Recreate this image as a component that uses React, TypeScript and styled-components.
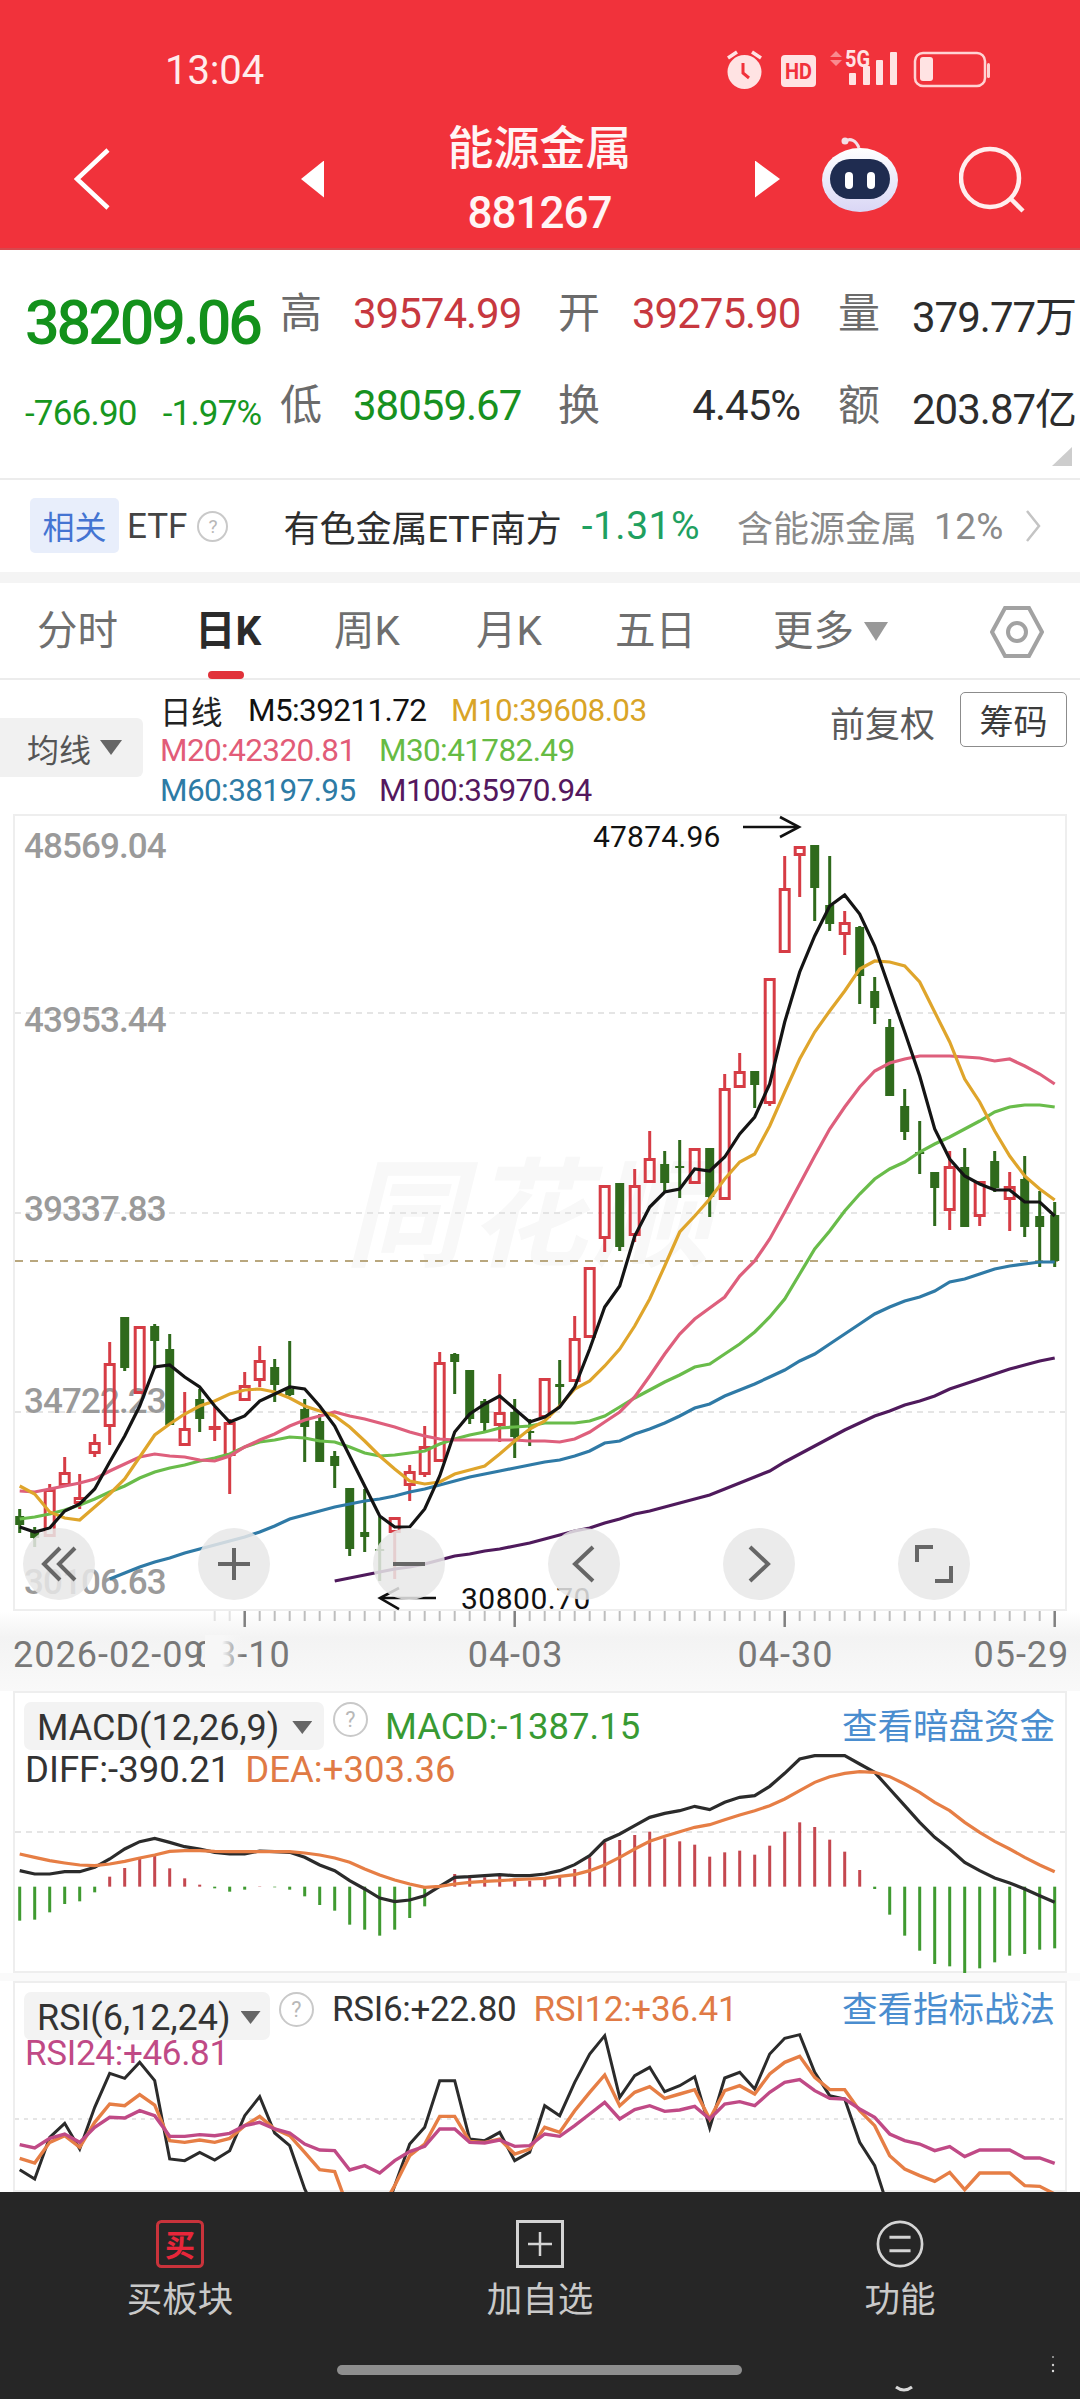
import React from "react";
import styled, { createGlobalStyle } from "styled-components";

const FONT = `Roboto, "Noto Sans CJK SC", sans-serif`;

const GlobalStyle = createGlobalStyle`
  html, body { margin: 0; padding: 0; background: #fff; }
  * { box-sizing: border-box; }
`;

// candle x position in page pixels
const cx = (i: number) => 19.7 + 15 * i;

// high, body top, body bottom, low, 1 = red / 0 = green
const CANDLES: number[][] = [
  [1510, 1517, 1526, 1534, 0], [1528, 1532, 1539, 1548, 0], [1485, 1490, 1538, 1538, 1], [1458, 1473, 1487, 1487, 1], [1475, 1498, 1505, 1510, 1],
  [1435, 1443, 1455, 1458, 1], [1343, 1364, 1428, 1446, 1], [1318, 1318, 1369, 1372, 0], [1327, 1327, 1395, 1395, 1], [1325, 1327, 1342, 1370, 0],
  [1335, 1350, 1426, 1426, 0], [1393, 1429, 1447, 1447, 1], [1390, 1400, 1420, 1433, 0], [1408, 1427, 1431, 1442, 1], [1420, 1423, 1457, 1495, 1],
  [1373, 1386, 1402, 1402, 1], [1347, 1361, 1382, 1388, 1], [1360, 1368, 1386, 1403, 0], [1342, 1390, 1396, 1397, 0], [1400, 1410, 1428, 1463, 0],
  [1415, 1422, 1463, 1463, 0], [1452, 1457, 1467, 1489, 0], [1489, 1489, 1550, 1557, 0], [1490, 1533, 1538, 1553, 0], [1518, 1550, 1551, 1582, 0],
  [1518, 1518, 1534, 1580, 1], [1466, 1472, 1487, 1502, 1], [1427, 1447, 1476, 1478, 1], [1353, 1363, 1463, 1463, 1], [1354, 1355, 1363, 1395, 0],
  [1371, 1371, 1420, 1425, 0], [1400, 1402, 1424, 1432, 0], [1375, 1413, 1427, 1443, 1], [1400, 1413, 1438, 1459, 0], [1420, 1432, 1434, 1447, 0],
  [1379, 1379, 1419, 1419, 1], [1361, 1385, 1388, 1407, 0], [1317, 1339, 1383, 1383, 1], [1268, 1268, 1339, 1339, 1], [1186, 1186, 1240, 1253, 1],
  [1184, 1184, 1248, 1252, 0], [1170, 1186, 1237, 1243, 1], [1132, 1159, 1184, 1184, 1], [1152, 1165, 1184, 1193, 0], [1141, 1167, 1169, 1199, 0],
  [1149, 1149, 1185, 1185, 1], [1149, 1149, 1198, 1218, 0], [1075, 1089, 1201, 1201, 1], [1054, 1072, 1089, 1089, 1], [1072, 1072, 1086, 1109, 0],
  [979, 979, 1105, 1107, 1], [857, 889, 954, 954, 1], [847, 847, 857, 898, 1], [846, 846, 889, 922, 0], [857, 906, 925, 932, 0],
  [912, 923, 936, 956, 1], [927, 928, 977, 1005, 0], [978, 992, 1009, 1025, 0], [1020, 1028, 1097, 1097, 0], [1090, 1107, 1133, 1141, 0],
  [1122, 1153, 1155, 1175, 0], [1173, 1173, 1189, 1227, 0], [1152, 1167, 1212, 1231, 1], [1149, 1168, 1228, 1228, 0], [1182, 1182, 1218, 1227, 1],
  [1152, 1162, 1189, 1193, 0], [1173, 1187, 1201, 1232, 1], [1157, 1180, 1228, 1238, 0], [1192, 1217, 1228, 1268, 0], [1203, 1216, 1262, 1268, 0],
];

const M5 = [1528,1533,1529,1512,1505,1490,1463,1437,1407,1368,1366,1378,1388,1407,1423,1417,1402,1395,1388,1390,1407,1427,1457,1487,1517,1528,1528,1510,1477,1433,1415,1405,1397,1410,1423,1418,1408,1388,1350,1308,1287,1237,1208,1193,1190,1170,1172,1158,1135,1118,1085,1023,973,937,907,896,915,947,990,1033,1077,1130,1160,1177,1185,1191,1191,1203,1203,1217];
const M10 = [1487,1495,1513,1519,1521,1508,1495,1480,1458,1436,1425,1415,1407,1402,1395,1391,1390,1393,1399,1407,1412,1417,1428,1442,1457,1470,1482,1485,1483,1475,1471,1467,1455,1442,1430,1422,1407,1390,1382,1367,1350,1327,1300,1267,1233,1217,1200,1180,1163,1155,1127,1093,1060,1033,1012,992,970,962,963,967,983,1013,1043,1080,1103,1132,1157,1177,1190,1201];
const M20 = [1492,1493,1490,1487,1484,1480,1472,1465,1458,1455,1457,1458,1461,1462,1457,1448,1441,1435,1427,1421,1417,1413,1417,1420,1424,1428,1433,1437,1440,1441,1441,1441,1441,1441,1442,1442,1443,1440,1433,1423,1413,1398,1377,1355,1335,1320,1309,1298,1277,1262,1240,1213,1185,1157,1130,1108,1088,1072,1064,1060,1057,1057,1057,1058,1059,1062,1060,1067,1075,1085];
const M30 = [1520,1518,1515,1511,1506,1500,1493,1487,1479,1473,1469,1466,1462,1459,1455,1448,1443,1441,1438,1439,1442,1443,1448,1454,1457,1456,1454,1452,1445,1440,1436,1433,1429,1428,1427,1424,1424,1424,1422,1417,1408,1399,1391,1383,1376,1368,1365,1355,1345,1333,1318,1300,1275,1250,1232,1212,1195,1180,1170,1163,1153,1145,1138,1130,1122,1113,1108,1106,1106,1108];
const M60 = [1580,1574,1568,1563,1559,1554,1550,1546,1542,1538,1533,1527,1520,1516,1512,1508,1505,1502,1500,1497,1493,1490,1486,1482,1478,1475,1472,1469,1466,1463,1461,1457,1452,1444,1442,1435,1430,1424,1417,1409,1405,1397,1391,1385,1378,1371,1362,1355,1345,1335,1325,1315,1308,1302,1298,1292,1283,1280,1275,1270,1267,1265,1263,1263];
const M100 = [1582,1579,1576,1573,1570,1568,1565,1561,1557,1555,1552,1550,1547,1544,1540,1536,1532,1529,1524,1520,1515,1512,1508,1504,1500,1496,1490,1484,1478,1472,1463,1455,1447,1439,1431,1424,1417,1412,1406,1402,1397,1390,1385,1380,1375,1370,1366,1362,1359];

// macd values were read off a 3x crop, base line is 623 there
const HIST = [725,722,700,675,667,640,593,567,540,530,568,598,617,628,638,632,622,625,632,652,678,695,737,752,770,752,717,682,623,585,588,595,590,605,605,600,595,570,535,490,483,468,458,478,487,497,533,520,515,527,500,458,430,444,482,518,573,630,707,770,815,855,862,882,868,850,830,825,812,808];
const DIFF = [575,585,585,578,578,565,540,510,488,478,490,503,510,520,525,525,516,518,520,535,558,575,605,630,657,668,663,650,622,595,593,590,587,590,590,585,575,557,530,485,465,440,415,403,395,382,392,370,355,350,322,283,240,230,230,230,255,280,330,380,430,475,510,550,575,597,612,630,650,670];
const DEA = [525,535,545,552,558,560,555,547,537,528,517,515,515,517,518,518,518,518,518,522,528,537,550,570,588,603,615,625,622,615,610,607,605,602,600,598,592,587,575,558,535,510,487,472,458,445,437,422,408,395,380,360,335,310,293,283,278,280,293,315,340,370,395,430,460,487,510,535,558,578];

const RSI6 = [572,600,475,433,510,385,283,298,250,305,540,545,520,543,515,410,353,462,500,630,720,750,800,800,750,620,495,445,305,305,480,485,460,545,520,380,410,310,225,170,355,290,265,338,320,293,447,297,280,330,225,178,167,280,350,360,490,560,700,800,800,800,800,800,800,800,800,800,800,800];
const RSI12 = [538,552,490,470,505,430,375,380,347,378,485,490,483,490,478,440,412,450,470,520,572,578,700,720,700,620,530,495,412,412,487,490,480,525,510,445,460,395,340,288,380,340,323,358,345,332,420,335,320,345,285,250,232,295,332,332,395,440,530,570,590,607,580,632,582,582,582,620,622,645];
const RSI24 = [497,507,478,465,490,445,415,417,395,410,472,472,467,470,463,440,430,450,462,495,513,515,573,560,582,545,518,502,450,450,490,492,483,502,500,465,472,440,405,370,420,392,380,397,393,382,420,375,368,380,340,310,302,335,358,360,390,415,465,485,495,515,503,533,513,513,513,537,537,553];

const pts = (ys: number[], start = 0, base = 0, div = 1) =>
  ys.map((y, i) => `${cx(i + start)},${base + y / div}`).join(" ");

const Page = styled.div`
  width: 1080px;
  height: 2400px;
  display: flex;
  flex-direction: column;
  overflow: hidden;
  background: #fff;
  font-family: ${FONT};
`;

const Header = styled.header`
  height: 250px;
  flex: none;
  background: #f1323b;
  border-bottom: 2px solid #d8474d;
  color: #fff;
`;

const StatusBar = styled.div`
  height: 110px;
  padding: 30px 85px 0 165px;
  display: flex;
  align-items: center;
  justify-content: space-between;
`;

const Time = styled.span`
  font-size: 40px;
  letter-spacing: -0.1px;
  color: #ffecec;
`;

const StatusIcons = styled.svg`
  margin-top: -2px;
`;

const NavBar = styled.div`
  height: 138px;
  display: flex;
  align-items: center;
  padding-left: 74px;
`;

const TitleBlock = styled.div`
  width: 431px;
  padding-top: 10px;
  text-align: center;
`;

const Title = styled.div`
  font-size: 46px;
  line-height: 58px;
  font-weight: 500;
  color: #fff5f5;
`;

const Code = styled.div`
  font-size: 44px;
  line-height: 72px;
  font-weight: 500;
  letter-spacing: -1px;
  color: #fff5f5;
`;

const NavArrow = styled.div<{ $dir: "left" | "right"; $ml?: number }>`
  width: ${(p) => (p.$dir === "left" ? 23 : 25)}px;
  height: 37px;
  margin-left: ${(p) => p.$ml ?? 0}px;
  background: #fff;
  clip-path: ${(p) =>
    p.$dir === "left" ? "polygon(100% 0, 100% 100%, 0 50%)" : "polygon(0 0, 100% 50%, 0 100%)"};
`;

const NavIcon = styled.svg<{ $ml: number; $mt?: number }>`
  flex: none;
  margin-left: ${(p) => p.$ml}px;
  margin-top: ${(p) => p.$mt ?? 0}px;
`;

const Quote = styled.section`
  height: 230px;
  flex: none;
  position: relative;
  border-bottom: 2px solid #ececec;
  padding-top: 33px;
  display: grid;
  grid-template-columns: 281px 72px 206px 73px 207px 73px 168px;
  grid-template-rows: 62px 62px;
  row-gap: 30px;
  align-items: center;
`;

const PriceCell = styled.div<{ $row: number }>`
  grid-row: ${(p) => p.$row};
  padding-left: 25px;
  white-space: nowrap;
`;

const BigPrice = styled.span`
  font-size: 61px;
  font-weight: 500;
  letter-spacing: -3.1px;
  color: #13911b;
  position: relative;
  top: 9px;
`;

const SmallChange = styled.span`
  font-size: 35px;
  letter-spacing: -0.8px;
  color: #17971f;
  position: relative;
  top: 7px;
  & + & {
    margin-left: 26px;
  }
`;

const QuoteLabel = styled.div`
  font-size: 42px;
  line-height: 46px;
  margin-left: -1px;
  color: #6b6b6b;
`;

const QuoteValue = styled.div<{ $color: string; $pad?: number }>`
  font-size: 42px;
  font-weight: 400;
  letter-spacing: -1px;
  white-space: nowrap;
  margin-top: -2px;
  text-align: ${(p) => (p.$pad === undefined ? "left" : "right")};
  padding-right: ${(p) => p.$pad ?? 0}px;
  color: ${(p) => p.$color};
`;

const CornerMark = styled.div`
  position: absolute;
  right: 8px;
  top: 197px;
  width: 20px;
  height: 19px;
  background: #cdcdcd;
  clip-path: polygon(100% 0, 100% 100%, 0 100%);
`;

const EtfRow = styled.section`
  height: 92px;
  flex: none;
  display: flex;
  align-items: center;
  padding-left: 30px;
  white-space: nowrap;
`;

const EtfTag = styled.span`
  width: 89px;
  height: 55px;
  margin-top: -2px;
  border-radius: 5px;
  background: #e8eefb;
  color: #4474d2;
  font-size: 32px;
  display: flex;
  align-items: center;
  justify-content: center;
`;

const EtfText = styled.span<{ $color: string; $ml: number; $size?: number; $ls?: number }>`
  margin-left: ${(p) => p.$ml}px;
  font-size: ${(p) => p.$size ?? 36}px;
  letter-spacing: ${(p) => p.$ls ?? 0}px;
  color: ${(p) => p.$color};
`;

const Help = styled.span<{ $size: number; $ml: number }>`
  flex: none;
  width: ${(p) => p.$size}px;
  height: ${(p) => p.$size}px;
  margin-left: ${(p) => p.$ml}px;
  border: 2px solid #c9c9c9;
  border-radius: 50%;
  color: #b8b8b8;
  font-size: ${(p) => p.$size * 0.62}px;
  display: inline-flex;
  align-items: center;
  justify-content: center;
`;

const EtfChevron = styled.svg`
  margin-left: 21px;
`;

const Band = styled.div`
  height: 11px;
  flex: none;
  background: #f4f4f4;
`;

const Tabs = styled.nav`
  height: 97px;
  flex: none;
  border-bottom: 2px solid #ececec;
  padding-left: 37px;
  display: grid;
  grid-template-columns: 158px 139px 142px 139px 158px 217px auto;
  align-items: center;
`;

const Tab = styled.div<{ $active?: boolean }>`
  position: relative;
  display: flex;
  align-items: center;
  font-size: 40.5px;
  line-height: 97px;
  height: 97px;
  color: ${(p) => (p.$active ? "#2b2b2b" : "#6f6f6f")};
  font-weight: ${(p) => (p.$active ? 700 : 400)};
`;

const TabMark = styled.i`
  position: absolute;
  left: 13px;
  top: 88px;
  width: 36px;
  height: 8px;
  border-radius: 4px;
  background: #e1323a;
`;

const Caret = styled.i<{ $w: number; $h: number; $ml: number; $color: string }>`
  display: inline-block;
  flex: none;
  width: ${(p) => p.$w}px;
  height: ${(p) => p.$h}px;
  margin-left: ${(p) => p.$ml}px;
  background: ${(p) => p.$color};
  clip-path: polygon(0 0, 100% 0, 50% 100%);
`;

const Legend = styled.section`
  height: 134px;
  flex: none;
  display: flex;
  position: relative;
`;

const MaPicker = styled.div`
  flex: none;
  width: 143px;
  height: 59px;
  margin: 38px 17px 0 0;
  padding-left: 27px;
  border-radius: 0 6px 6px 0;
  background: #f1f1f1;
  color: #555;
  font-size: 32px;
  display: flex;
  align-items: center;
`;

const LegendRows = styled.div`
  padding-top: 10px;
  width: 500px;
`;

const LegendRow = styled.div`
  height: 40px;
  display: flex;
  align-items: center;
`;

const LegendItem = styled.span<{ $w: number; $color: string }>`
  width: ${(p) => p.$w}px;
  flex: none;
  font-size: 31.5px;
  letter-spacing: -0.6px;
  white-space: nowrap;
  color: ${(p) => p.$color};
`;

const Adjust = styled.span`
  margin: 26px 0 0 170px;
  height: 40px;
  font-size: 35px;
  line-height: 40px;
  color: #5b5b5b;
  white-space: nowrap;
`;

const ChipButton = styled.span`
  flex: none;
  margin: 12px 0 0 25px;
  width: 107px;
  height: 55px;
  border: 1.5px solid #8c8c8c;
  border-radius: 5px;
  font-size: 34px;
  color: #3c3c3c;
  display: flex;
  align-items: center;
  justify-content: center;
`;

const ChartFrame = styled.div<{ $h: number }>`
  flex: none;
  position: relative;
  margin: 0 13px;
  width: 1054px;
  height: ${(p) => p.$h}px;
  background: #fff;
  box-shadow: inset 0 0 0 2px #eeeeee;
  overflow: hidden;
`;

const ChartSvg = styled.svg`
  display: block;
  font-family: ${FONT};
`;

const ControlRow = styled.div`
  position: absolute;
  left: 10px;
  top: 714px;
  display: flex;
  gap: 103px;
`;

const Control = styled.div`
  width: 72px;
  height: 72px;
  border-radius: 50%;
  background: rgba(232, 232, 232, 0.85);
  display: flex;
  align-items: center;
  justify-content: center;
`;

const AxisBand = styled.div`
  height: 80px;
  flex: none;
  background: linear-gradient(#ffffff 0, #f3f3f3 26px, #f9f9f9 100%);
`;

const Ticks = styled.svg`
  display: block;
`;

const DateRow = styled.div`
  display: flex;
  padding: 0 0 0 13px;
  font-size: 36px;
  line-height: 40px;
  letter-spacing: 1px;
  color: #787878;
`;

const DateLabel = styled.span<{ $ml?: number; $front?: boolean }>`
  margin-left: ${(p) => p.$ml ?? 0}px;
  position: relative;
  white-space: nowrap;
  z-index: ${(p) => (p.$front ? 1 : 0)};
  ${(p) =>
    p.$front &&
    `&::after {
      content: "";
      position: absolute;
      left: 100%;
      top: 0;
      width: 38px;
      height: 40px;
      background: linear-gradient(90deg, #f7f7f7 45%, rgba(247,247,247,0));
    }`}
`;

const PanelHead = styled.div<{ $top: number }>`
  position: absolute;
  left: 11px;
  right: 12px;
  top: ${(p) => p.$top}px;
  display: flex;
  align-items: flex-start;
  font-size: 36px;
  white-space: nowrap;
`;

const Picker = styled.div<{ $w: number }>`
  flex: none;
  width: ${(p) => p.$w}px;
  height: 48px;
  padding: 3px 0 0 13px;
  border-radius: 7px;
  background: #f3f3f3;
  color: #333;
  display: flex;
  align-items: center;
  font-size: 36px;
`;

const Reading = styled.span<{ $color: string; $ml?: number; $size?: number; $lh?: number }>`
  margin-left: ${(p) => p.$ml ?? 0}px;
  font-size: ${(p) => p.$size ?? 35}px;
  line-height: ${(p) => p.$lh ?? 44}px;
  letter-spacing: ${(p) => (p.$size ? 0 : -0.3)}px;
  color: ${(p) => p.$color};
`;

const HeadLink = styled.span<{ $lh: number }>`
  margin-left: auto;
  font-size: 35.5px;
  line-height: ${(p) => p.$lh}px;
  color: #4a8dcf;
`;

const SubLine = styled.div<{ $top: number }>`
  position: absolute;
  left: 12px;
  top: ${(p) => p.$top}px;
  white-space: nowrap;
`;

const PanelGap = styled.div`
  height: 8px;
  flex: none;
  background: #fafafa;
`;

const BottomNav = styled.footer`
  flex: none;
  height: 207px;
  position: relative;
  background: #262626;
  display: grid;
  grid-template-columns: repeat(3, 360px);
  padding-top: 28px;
`;

const NavItem = styled.div`
  display: flex;
  flex-direction: column;
  align-items: center;
  color: #c9c9c9;
  font-size: 35.5px;
  line-height: 40px;
`;

const NavGlyph = styled.svg`
  display: block;
  margin-bottom: 12px;
`;

const HomeBar = styled.div`
  position: absolute;
  left: 337px;
  top: 173px;
  width: 405px;
  height: 10px;
  border-radius: 5px;
  background: #8e8e8e;
`;

const Smudge = styled.svg`
  position: absolute;
  left: 880px;
  top: 155px;
`;

const CandleGlyph = ({ c, i }: { c: number[]; i: number }) => {
  const [hi, top, bot, lo, up] = c;
  const x = cx(i);
  if (up) {
    return (
      <g stroke="#d63c45" fill="none">
        <line x1={x} x2={x} y1={hi} y2={top} strokeWidth={3} />
        <line x1={x} x2={x} y1={bot} y2={lo} strokeWidth={3} />
        <rect x={x - 4.5} y={top + 1.5} width={9} height={Math.max(bot - top - 3, 1)} strokeWidth={3} />
      </g>
    );
  }
  return (
    <g fill="#2f6a1c" stroke="none">
      <rect x={x - 1.5} y={hi} width={3} height={lo - hi} />
      <rect x={x - 4.5} y={top} width={9} height={Math.max(bot - top, 2)} />
    </g>
  );
};

const AXIS_LABELS: [string, number][] = [
  ["48569.04", 859],
  ["43953.44", 1033],
  ["39337.83", 1222],
  ["34722.23", 1414],
  ["30106.63", 1595],
];

const KChart = () => (
  <ChartFrame $h={797}>
    <ChartSvg width={1054} height={797} viewBox="13 815 1054 797">
      <text x={345} y={1258} fontSize={118} fontWeight={700} fontStyle="italic" fill="#f8f8f8" letterSpacing={6}>同花顺</text>
      {[1014, 1214, 1413].map((y) => (
        <line key={y} x1={15} x2={1065} y1={y} y2={y} stroke="#dddddd" strokeWidth={1.5} strokeDasharray="6 5" />
      ))}
      <line x1={15} x2={1065} y1={1262} y2={1262} stroke="#b9a77e" strokeWidth={2} strokeDasharray="8 7" />
      {AXIS_LABELS.map(([t, y]) => (
        <text key={t} x={24} y={y} fontSize={35} fontWeight={500} fill="#9a9a9a" letterSpacing={-0.9}>{t}</text>
      ))}
      {CANDLES.map((c, i) => (
        <CandleGlyph key={i} c={c} i={i} />
      ))}
      <polyline points={pts(M100, 21)} fill="none" stroke="#4f1a5c" strokeWidth={3.2} />
      <polyline points={pts(M60, 6)} fill="none" stroke="#2f7aa6" strokeWidth={3.2} />
      <polyline points={pts(M30)} fill="none" stroke="#69bc4a" strokeWidth={3.2} />
      <polyline points={pts(M20)} fill="none" stroke="#de5f7c" strokeWidth={3.2} />
      <polyline points={pts(M10)} fill="none" stroke="#dfa52b" strokeWidth={3.2} />
      <polyline points={pts(M5)} fill="none" stroke="#141414" strokeWidth={3.2} />

      <text x={593} y={848} fontSize={30} fill="#111" letterSpacing={0.2}>47874.96</text>
      <g fill="none" stroke="#111" strokeWidth={2.6}>
        <path d="M743 828H798" />
        <path d="M780 818L799 828L780 838" />
      </g>
      <text x={461} y={1610} fontSize={30} fill="#111" letterSpacing={0.5}>30800.70</text>
      <g fill="none" stroke="#111" strokeWidth={2.6}>
        <path d="M381 1599H436" />
        <path d="M399 1589L380 1599L399 1610" />
      </g>
    </ChartSvg>
    <ControlRow>
      <Control>
        <svg width="40" height="40" viewBox="0 0 40 40" fill="none" stroke="#666" strokeWidth="4"><path d="M21 4L5 20L21 36M36 4L20 20L36 36" /></svg>
      </Control>
      <Control>
        <svg width="36" height="36" viewBox="0 0 36 36" fill="none" stroke="#666" strokeWidth="4"><path d="M18 2V34M2 18H34" /></svg>
      </Control>
      <Control>
        <svg width="36" height="36" viewBox="0 0 36 36" fill="none" stroke="#666" strokeWidth="4"><path d="M2 18H34" /></svg>
      </Control>
      <Control>
        <svg width="24" height="38" viewBox="0 0 24 38" fill="none" stroke="#666" strokeWidth="4"><path d="M21 2L3 19L21 36" /></svg>
      </Control>
      <Control>
        <svg width="24" height="38" viewBox="0 0 24 38" fill="none" stroke="#666" strokeWidth="4"><path d="M3 2L21 19L3 36" /></svg>
      </Control>
      <Control>
        <svg width="38" height="38" viewBox="0 0 38 38" fill="none" stroke="#666" strokeWidth="4"><path d="M2 17V2H18M36 21V36H20" /></svg>
      </Control>
    </ControlRow>
  </ChartFrame>
);

const LONG_TICKS = [15, 33, 51, 69];

const DateAxis = () => (
  <AxisBand>
    <Ticks width={1080} height={24} viewBox="0 0 1080 24">
      {CANDLES.map((_, i) =>
        i < 13 ? null : LONG_TICKS.includes(i) ? (
          <line key={i} x1={cx(i)} x2={cx(i)} y1={0} y2={16} stroke="#808080" strokeWidth={2.5} />
        ) : (
          <line key={i} x1={cx(i)} x2={cx(i)} y1={0} y2={10} stroke="#bdbdbd" strokeWidth={2} opacity={i < 15 ? 0.4 : 1} />
        )
      )}
    </Ticks>
    <DateRow>
      <DateLabel $front>2026-02-09</DateLabel>
      <DateLabel $ml={-10}>03-10</DateLabel>
      <DateLabel $ml={177}>04-03</DateLabel>
      <DateLabel $ml={174}>04-30</DateLabel>
      <DateLabel $ml={140}>05-29</DateLabel>
    </DateRow>
  </AxisBand>
);

const MacdPanel = () => (
  <ChartFrame $h={282}>
    <ChartSvg width={1054} height={282} viewBox="13 1692 1054 282">
      <line x1={15} x2={1065} y1={1833} y2={1833} stroke="#dddddd" strokeWidth={1.5} strokeDasharray="6 5" />
      {HIST.map((v, i) =>
        v === 623 ? null : (
          <line
            key={i}
            x1={cx(i)}
            x2={cx(i)}
            y1={1680 + 623 / 3}
            y2={1680 + v / 3}
            stroke={v < 623 ? "#c4474f" : "#3f9a30"}
            strokeWidth={3}
          />
        )
      )}
      <polyline points={pts(DIFF, 0, 1680, 3)} fill="none" stroke="#2b2b2b" strokeWidth={3.2} />
      <polyline points={pts(DEA, 0, 1680, 3)} fill="none" stroke="#e67e45" strokeWidth={3.2} />
    </ChartSvg>
    <PanelHead $top={11}>
      <Picker $w={300}>
        MACD(12,26,9)
        <Caret $w={20} $h={13} $ml={13} $color="#666" />
      </Picker>
      <Help $size={35} $ml={9}>?</Help>
      <Reading $color="#389a33" $ml={17} $size={36.5} $lh={50}>MACD:-1387.15</Reading>
      <HeadLink $lh={50}>查看暗盘资金</HeadLink>
    </PanelHead>
    <SubLine $top={57}>
      <Reading $color="#333" $size={36.5}>DIFF:-390.21</Reading>
      <Reading $color="#e07a45" $ml={15} $size={36.5}>DEA:+303.36</Reading>
    </SubLine>
  </ChartFrame>
);

const RsiPanel = () => (
  <ChartFrame $h={211}>
    <ChartSvg width={1054} height={211} viewBox="13 1982 1054 211">
      <line x1={15} x2={1065} y1={2120} y2={2120} stroke="#dddddd" strokeWidth={1.5} strokeDasharray="4 5" />
      <polyline points={pts(RSI6, 0, 1980, 3)} fill="none" stroke="#2b2b2b" strokeWidth={3} />
      <polyline points={pts(RSI12, 0, 1980, 3)} fill="none" stroke="#e67e45" strokeWidth={3.4} />
      <polyline points={pts(RSI24, 0, 1980, 3)} fill="none" stroke="#c04a86" strokeWidth={3.4} />
    </ChartSvg>
    <PanelHead $top={11}>
      <Picker $w={246}>
        RSI(6,12,24)
        <Caret $w={20} $h={13} $ml={10} $color="#666" />
      </Picker>
      <Help $size={35} $ml={9}>?</Help>
      <Reading $color="#333" $ml={18} $lh={36}>RSI6:+22.80</Reading>
      <Reading $color="#e07a45" $ml={17} $lh={36}>RSI12:+36.41</Reading>
      <HeadLink $lh={36}>查看指标战法</HeadLink>
    </PanelHead>
    <SubLine $top={51}>
      <Reading $color="#c04a86">RSI24:+46.81</Reading>
    </SubLine>
  </ChartFrame>
);

export default function App() {
  return (
    <Page>
      <GlobalStyle />
      <Header>
        <StatusBar>
          <Time>13:04</Time>
          <StatusIcons width="270" height="46" viewBox="0 -4 270 46">
            {/* alarm */}
            <circle cx="19.5" cy="22" r="17" fill="#ffe3e3" />
            <path d="M3 8L12 2M36 8L27 2" stroke="#ffe3e3" strokeWidth="3.5" />
            <path d="M18 13V23L24 28" fill="none" stroke="#f1323b" strokeWidth="3" />
            {/* hd */}
            <rect x="56" y="5" width="35" height="32" rx="4" fill="#ffe3e3" />
            <text x="60" y="29" fontSize="22" fontWeight="700" fill="#f1323b" fontFamily="Roboto, sans-serif" textLength="27" lengthAdjust="spacingAndGlyphs">HD</text>
            {/* 5g + bars */}
            <path d="M105 7L111 1L117 7ZM105 10H117L111 16Z" fill="#f98a8f" />
            <text x="120" y="17" fontSize="23" fontWeight="700" fill="#ffe3e3" fontFamily="Roboto, sans-serif" textLength="25" lengthAdjust="spacingAndGlyphs">5G</text>
            <rect x="124" y="23" width="7" height="12" rx="1" fill="#ffe3e3" />
            <rect x="138" y="16" width="7" height="19" rx="1" fill="#ffe3e3" />
            <rect x="151" y="10" width="7" height="25" rx="1" fill="#ffe3e3" />
            <rect x="165" y="2" width="7" height="33" rx="1" fill="#ffe3e3" />
            {/* battery */}
            <rect x="190" y="3" width="70" height="33" rx="8" fill="none" stroke="#ffd3d3" strokeWidth="2.5" />
            <rect x="195" y="7" width="13" height="24" rx="3" fill="#ffe3e3" />
            <rect x="262" y="13" width="3" height="15" rx="1.5" fill="#ffd3d3" />
          </StatusIcons>
        </StatusBar>
        <NavBar>
          <svg width="36" height="62" viewBox="0 0 36 62" fill="none" stroke="#fff" strokeWidth="4.5">
            <path d="M34 2L3 31L34 60" />
          </svg>
          <NavArrow $dir="left" $ml={191} />
          <TitleBlock>
            <Title>能源金属</Title>
            <Code>881267</Code>
          </TitleBlock>
          <NavArrow $dir="right" />
          <NavIcon $ml={40} $mt={-8} width="80" height="76" viewBox="0 0 80 76">
            <defs>
              <linearGradient id="bot" x1="0" y1="0" x2="0" y2="1">
                <stop offset="0" stopColor="#ffffff" />
                <stop offset="1" stopColor="#d9d6f5" />
              </linearGradient>
            </defs>
            <path d="M26 4C30 1 36 3 39 11" fill="none" stroke="#f4dfe6" strokeWidth="3" />
            <circle cx="25" cy="4" r="3.5" fill="#f4dfe6" />
            <ellipse cx="40" cy="43" rx="38" ry="32" fill="url(#bot)" />
            <rect x="10" y="22" width="60" height="40" rx="20" fill="#1f2c50" />
            <rect x="25" y="35" width="8" height="17" rx="4" fill="#fff" />
            <rect x="47" y="35" width="8" height="17" rx="4" fill="#fff" />
          </NavIcon>
          <NavIcon $ml={59} width="66" height="68" viewBox="0 0 66 68" fill="none" stroke="#ffeeee" strokeWidth="4.5">
            <circle cx="31" cy="33" r="29" />
            <path d="M52 54L64 66" />
          </NavIcon>
        </NavBar>
      </Header>

      <Quote>
        <PriceCell $row={1}><BigPrice>38209.06</BigPrice></PriceCell>
        <QuoteLabel>高</QuoteLabel>
        <QuoteValue $color="#c7383f">39574.99</QuoteValue>
        <QuoteLabel>开</QuoteLabel>
        <QuoteValue $color="#c7383f">39275.90</QuoteValue>
        <QuoteLabel>量</QuoteLabel>
        <QuoteValue $color="#2d2d2d">379.77万</QuoteValue>

        <PriceCell $row={2}>
          <SmallChange>-766.90</SmallChange>
          <SmallChange>-1.97%</SmallChange>
        </PriceCell>
        <QuoteLabel>低</QuoteLabel>
        <QuoteValue $color="#17911f">38059.67</QuoteValue>
        <QuoteLabel>换</QuoteLabel>
        <QuoteValue $color="#2d2d2d" $pad={39}>4.45%</QuoteValue>
        <QuoteLabel>额</QuoteLabel>
        <QuoteValue $color="#2d2d2d">203.87亿</QuoteValue>
        <CornerMark />
      </Quote>

      <EtfRow>
        <EtfTag>相关</EtfTag>
        <EtfText $color="#444" $ml={8} $size={35}>ETF</EtfText>
        <Help $size={31} $ml={10}>?</Help>
        <EtfText $color="#2e2e2e" $ml={55}>有色金属ETF南方</EtfText>
        <EtfText $color="#1fa060" $ml={20} $size={39} $ls={0.5}>-1.31%</EtfText>
        <EtfText $color="#8a8a8a" $ml={37}>含能源金属</EtfText>
        <EtfText $color="#8a8a8a" $ml={17} $size={37} $ls={0.3}>12%</EtfText>
        <EtfChevron width="16" height="32" viewBox="0 0 16 32" fill="none" stroke="#c4c4c4" strokeWidth="2.5">
          <path d="M2 1L14 16L2 31" />
        </EtfChevron>
      </EtfRow>
      <Band />

      <Tabs>
        <Tab>分时</Tab>
        <Tab $active>
          日K
          <TabMark />
        </Tab>
        <Tab>周K</Tab>
        <Tab>月K</Tab>
        <Tab>五日</Tab>
        <Tab>
          更多
          <Caret $w={24} $h={19} $ml={10} $color="#999" />
        </Tab>
        <svg width="54" height="54" viewBox="0 0 54 54" fill="none" stroke="#a2a2a2" strokeWidth="4">
          <path d="M15 3H39L52 27L39 51H15L2 27Z" />
          <circle cx="27" cy="27" r="9" />
        </svg>
      </Tabs>

      <Legend>
        <MaPicker>
          均线
          <Caret $w={22} $h={15} $ml={9} $color="#666" />
        </MaPicker>
        <LegendRows>
          <LegendRow>
            <LegendItem $w={88} $color="#222">日线</LegendItem>
            <LegendItem $w={203} $color="#111">M5:39211.72</LegendItem>
            <LegendItem $w={200} $color="#d9a427">M10:39608.03</LegendItem>
          </LegendRow>
          <LegendRow>
            <LegendItem $w={219} $color="#e25c78">M20:42320.81</LegendItem>
            <LegendItem $w={200} $color="#66bb44">M30:41782.49</LegendItem>
          </LegendRow>
          <LegendRow>
            <LegendItem $w={219} $color="#2d7ba5">M60:38197.95</LegendItem>
            <LegendItem $w={220} $color="#54185e">M100:35970.94</LegendItem>
          </LegendRow>
        </LegendRows>
        <Adjust>前复权</Adjust>
        <ChipButton>筹码</ChipButton>
      </Legend>

      <KChart />
      <DateAxis />
      <MacdPanel />
      <PanelGap />
      <RsiPanel />

      <BottomNav>
        <NavItem>
          <NavGlyph width="48" height="48" viewBox="0 0 48 48" fill="none">
            <rect x="1.5" y="1.5" width="45" height="45" rx="4" stroke="#c9333b" strokeWidth="3" />
            <text x="24" y="36" textAnchor="middle" fontSize="30" fontWeight="700" fill="#e8263a" fontFamily={FONT}>买</text>
          </NavGlyph>
          买板块
        </NavItem>
        <NavItem>
          <NavGlyph width="48" height="48" viewBox="0 0 48 48" fill="none" stroke="#d4d4d4">
            <rect x="1.5" y="1.5" width="45" height="45" strokeWidth="3" />
            <path d="M24 12V36M12 24H36" strokeWidth="2.5" />
          </NavGlyph>
          加自选
        </NavItem>
        <NavItem>
          <NavGlyph width="48" height="48" viewBox="0 0 50 50" fill="none" stroke="#d4d4d4">
            <circle cx="25" cy="25" r="23" strokeWidth="2.8" />
            <path d="M14 18H36M14 32H36" strokeWidth="3" />
          </NavGlyph>
          功能
        </NavItem>
        <HomeBar />
        <Smudge width="190" height="50" viewBox="0 0 190 50">
          <path d="M16 40Q24 46 32 40" fill="none" stroke="#d8d8d8" strokeWidth="3" />
          <circle cx="173" cy="10" r="1" fill="#aaa" />
          <circle cx="173" cy="18" r="1.2" fill="#ccc" />
          <circle cx="173" cy="24" r="1.2" fill="#ddd" />
        </Smudge>
      </BottomNav>
    </Page>
  );
}
